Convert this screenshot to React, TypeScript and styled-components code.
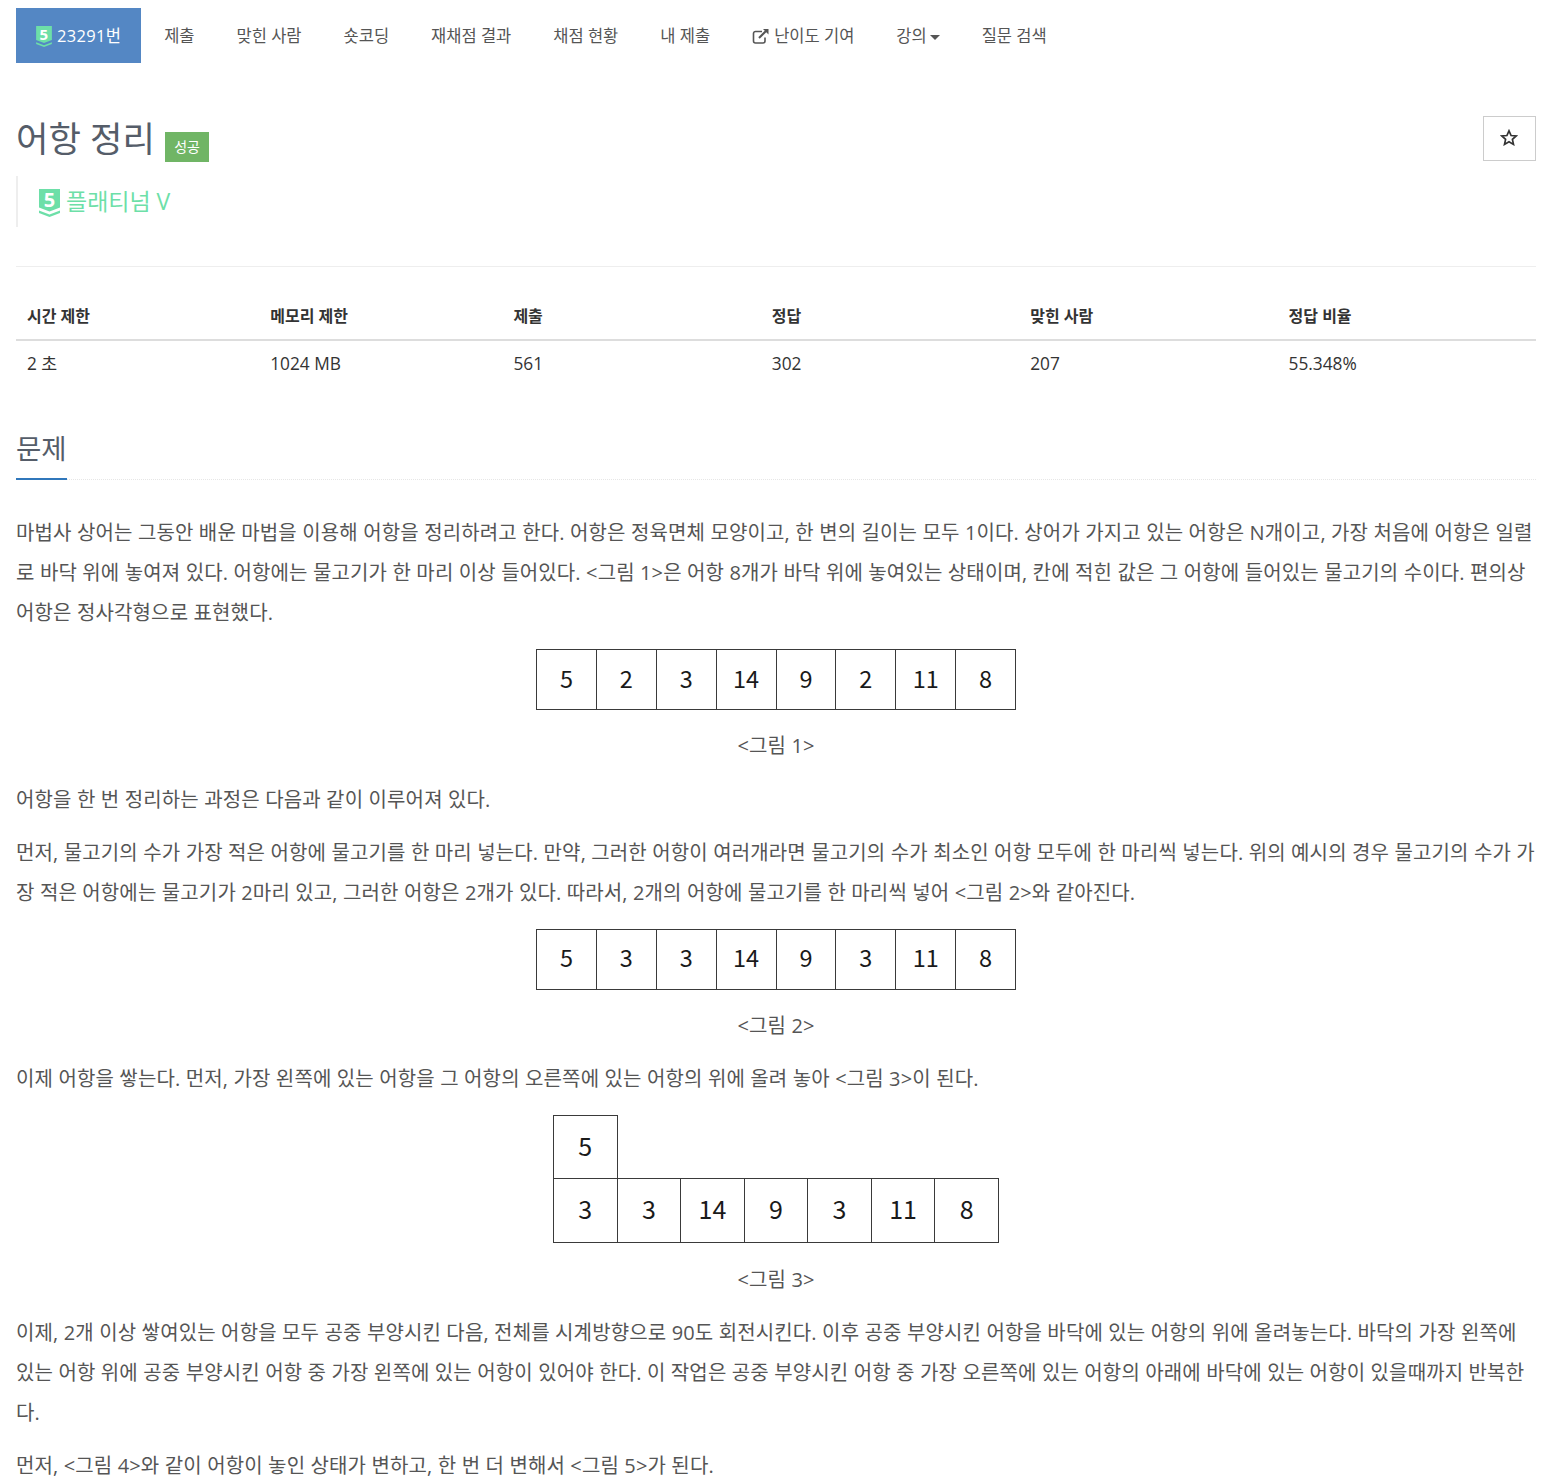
import React from "react";
import styled, { createGlobalStyle } from "styled-components";

const Global = createGlobalStyle`
  html, body { margin: 0; padding: 0; background: #fff; }
  body { font-family: "Open Sans", "Noto Sans CJK KR", sans-serif; color: #555; overflow: hidden; }
`;

const Page = styled.div`
  width: 1520px;
  height: 1480px;
  overflow: hidden;
  padding: 8px 10px 0 16px;
`;

const Nav = styled.nav`
  display: flex;
  align-items: center;
  height: 55px;
  gap: 2px;
`;

const Tab = styled.a<{ $active?: boolean }>`
  display: flex;
  align-items: center;
  height: 55px;
  padding: 0 20px;
  margin-right: ${(p) => (p.$active ? "1px" : "0")};
  font-size: 16.5px;
  line-height: 20px;
  letter-spacing: ${(p) => (p.$active ? "0.3px" : "0")};
  color: ${(p) => (p.$active ? "#fff" : "#555")};
  background: ${(p) => (p.$active ? "#5487c4" : "transparent")};
`;

const TabIcon = styled.svg`
  width: 16px;
  height: 21px;
  margin: 2px 5px 0 0;
  flex: none;
  overflow: visible;
`;

const LinkIcon = styled.svg`
  width: 18px;
  height: 16px;
  margin-right: 4px;
  flex: none;
`;

const Caret = styled.span`
  display: inline-block;
  margin-left: 3px;
  margin-top: 3px;
  border-top: 5px solid #555;
  border-left: 5.5px solid transparent;
  border-right: 5.5px solid transparent;
`;

const Header = styled.header`
  display: flex;
  align-items: flex-start;
  justify-content: space-between;
  margin-top: 53px;
  height: 46px;
`;

const Title = styled.h1`
  display: flex;
  align-items: flex-start;
  margin: 0;
  font-size: 35.3px;
  line-height: 44px;
  font-weight: 400;
  color: #555d69;
`;

const Badge = styled.span`
  display: flex;
  align-items: center;
  justify-content: center;
  width: 44px;
  height: 30px;
  margin: 16px 0 0 10px;
  background: #70b565;
  color: #fff;
  font-size: 14px;
  line-height: 30px;
`;

const StarButton = styled.button`
  display: flex;
  align-items: center;
  justify-content: center;
  width: 53px;
  height: 45px;
  padding: 0 2px 2px 0;
  background: #fff;
  border: 1px solid #ccc;
`;

const Tier = styled.div`
  display: flex;
  align-items: center;
  height: 51px;
  margin-top: 14px;
  padding: 0 0 2px 21px;
  box-sizing: border-box;
  border-left: 2px solid #eee;
  font-size: 23px;
  line-height: 34px;
  color: #6ddfa8;
`;

const TierIcon = styled.svg`
  width: 21px;
  height: 28px;
  margin: 4px 6px 0 0;
  flex: none;
  overflow: visible;
`;

const Rule = styled.hr`
  margin: 39px 0 0;
  border: 0;
  border-top: 1px solid #eee;
`;

const Stats = styled.table`
  width: 100%;
  margin-top: 27px;
  border-collapse: collapse;
  table-layout: fixed;
  font-size: 16px;
  line-height: 24px;
`;

const Th = styled.th<{ $w: string }>`
  width: ${(p) => p.$w};
  height: 46px;
  padding: 0 11px 2px;
  box-sizing: border-box;
  text-align: left;
  font-weight: 700;
  color: #333;
  border-bottom: 2px solid #ddd;
`;

const Td = styled.td`
  height: 45px;
  padding: 0 11px;
  font-size: 17.3px;
  color: #333;
`;

const SectionHead = styled.div`
  position: relative;
  margin-top: 40px;
  height: 53px;
  border-bottom: 1px dotted #e6e6e6;
`;

const SectionTitle = styled.h2`
  display: inline-block;
  height: 54px;
  margin: 0;
  box-sizing: border-box;
  font-size: 27.5px;
  line-height: 46px;
  font-weight: 400;
  color: #555d69;
  border-bottom: 2px solid #3077bb;
`;

const Body = styled.section`
  margin-top: 33px;
  font-size: 20px;
  letter-spacing: 0.14px;
  line-height: 40px;
  color: #555;
  word-break: break-all;
`;

const Para = styled.p`
  margin: 0 0 13.2px;
`;

const Caption = styled.p`
  margin: 0 0 13.2px;
  text-align: center;
`;

const FigureWrap = styled.div<{ $h: number; $top: number }>`
  display: flex;
  justify-content: center;
  align-items: flex-start;
  box-sizing: border-box;
  height: ${(p) => p.$h}px;
  padding-top: ${(p) => p.$top}px;
  margin-bottom: 13.2px;
`;

const Strip = styled.div<{ $cols: number; $size: number }>`
  display: grid;
  grid-template-columns: repeat(${(p) => p.$cols}, ${(p) => p.$size}px);
  grid-auto-rows: ${(p) => p.$size}px;
  padding: 0 1px 1px 0;
`;

const Cell = styled.div<{ $fs: number }>`
  display: flex;
  align-items: center;
  justify-content: center;
  margin: 0 -1px -1px 0;
  padding-bottom: 4px;
  box-sizing: border-box;
  border: 1px solid #3a3a3a;
  font-family: "Noto Sans CJK KR", sans-serif;
  font-size: ${(p) => p.$fs}px;
  letter-spacing: 0;
  color: #1a1a1a;
`;

const Blank = styled.div`
  grid-column: span 6;
`;

const Shield = ({ size }: { size: "s" | "l" }) => {
  const body = (
    <>
      <path d="M0 0H21V18.5L10.5 22.5L0 18.5Z" fill="#6ddfa8" />
      <path d="M0 21.5L10.5 25.5L21 21.5V24L10.5 28L0 24Z" fill="#6ddfa8" />
      <text x="10.5" y="18" textAnchor="middle" fontSize="20" fontWeight="700" fill="#fff" fontFamily="Open Sans, sans-serif">5</text>
    </>
  );
  return size === "s" ? (
    <TabIcon viewBox="0 0 21 28">{body}</TabIcon>
  ) : (
    <TierIcon viewBox="0 0 21 28">{body}</TierIcon>
  );
};

const Figure = ({ values }: { values: number[] }) => (
  <FigureWrap $h={67} $top={3}>
    <Strip $cols={8} $size={59.875}>
      {values.map((v, i) => (
        <Cell key={i} $fs={23.5}>{v}</Cell>
      ))}
    </Strip>
  </FigureWrap>
);

const tabs = ["제출", "맞힌 사람", "숏코딩", "재채점 결과", "채점 현황", "내 제출"];

export default function App() {
  return (
    <Page>
      <Global />
      <Nav>
        <Tab $active><Shield size="s" />23291번</Tab>
        {tabs.map((t) => <Tab key={t}>{t}</Tab>)}
        <Tab>
          <LinkIcon viewBox="0 0 18 16" fill="none" stroke="#555" strokeWidth="1.6">
            <path d="M10 3.5H3.5a2 2 0 0 0-2 2V13a2 2 0 0 0 2 2H11a2 2 0 0 0 2-2V9.5" />
            <path d="M7 10L15 2" strokeWidth="2" />
            <path d="M11 1H16.5V6.5Z" fill="#555" stroke="none" />
          </LinkIcon>
          난이도 기여
        </Tab>
        <Tab>강의<Caret /></Tab>
        <Tab>질문 검색</Tab>
      </Nav>

      <Header>
        <Title>어항 정리<Badge>성공</Badge></Title>
        <StarButton aria-label="star">
          <svg width="18" height="17" viewBox="0 0 18 17" fill="none" stroke="#333" strokeWidth="1.7">
            <path d="M9 1.8L11.1 6.5L16.2 7L12.4 10.4L13.5 15.4L9 12.8L4.5 15.4L5.6 10.4L1.8 7L6.9 6.5Z" />
          </svg>
        </StarButton>
      </Header>
      <Tier><Shield size="l" />플래티넘 V</Tier>
      <Rule />

      <Stats>
        <thead>
          <tr>
            <Th $w="16%">시간 제한</Th>
            <Th $w="16%">메모리 제한</Th>
            <Th $w="17%">제출</Th>
            <Th $w="17%">정답</Th>
            <Th $w="17%">맞힌 사람</Th>
            <Th $w="17%">정답 비율</Th>
          </tr>
        </thead>
        <tbody>
          <tr>
            <Td>2 초</Td>
            <Td>1024 MB</Td>
            <Td>561</Td>
            <Td>302</Td>
            <Td>207</Td>
            <Td>55.348%</Td>
          </tr>
        </tbody>
      </Stats>

      <SectionHead><SectionTitle>문제</SectionTitle></SectionHead>

      <Body>
        <Para>마법사 상어는 그동안 배운 마법을 이용해 어항을 정리하려고 한다. 어항은 정육면체 모양이고, 한 변의 길이는 모두 1이다. 상어가 가지고 있는 어항은 N개이고, 가장 처음에 어항은 일렬로 바닥 위에 놓여져 있다. 어항에는 물고기가 한 마리 이상 들어있다. &lt;그림 1&gt;은 어항 8개가 바닥 위에 놓여있는 상태이며, 칸에 적힌 값은 그 어항에 들어있는 물고기의 수이다. 편의상 어항은 정사각형으로 표현했다.</Para>
        <Figure values={[5, 2, 3, 14, 9, 2, 11, 8]} />
        <Caption>&lt;그림 1&gt;</Caption>
        <Para>어항을 한 번 정리하는 과정은 다음과 같이 이루어져 있다.</Para>
        <Para>먼저, 물고기의 수가 가장 적은 어항에 물고기를 한 마리 넣는다. 만약, 그러한 어항이 여러개라면 물고기의 수가 최소인 어항 모두에 한 마리씩 넣는다. 위의 예시의 경우 물고기의 수가 가장 적은 어항에는 물고기가 2마리 있고, 그러한 어항은 2개가 있다. 따라서, 2개의 어항에 물고기를 한 마리씩 넣어 &lt;그림 2&gt;와 같아진다.</Para>
        <Figure values={[5, 3, 3, 14, 9, 3, 11, 8]} />
        <Caption>&lt;그림 2&gt;</Caption>
        <Para>이제 어항을 쌓는다. 먼저, 가장 왼쪽에 있는 어항을 그 어항의 오른쪽에 있는 어항의 위에 올려 놓아 &lt;그림 3&gt;이 된다.</Para>
        <FigureWrap $h={134} $top={2}>
          <Strip $cols={7} $size={63.57}>
            <Cell $fs={25}>5</Cell>
            <Blank />
            {[3, 3, 14, 9, 3, 11, 8].map((v, i) => (
              <Cell key={i} $fs={25}>{v}</Cell>
            ))}
          </Strip>
        </FigureWrap>
        <Caption>&lt;그림 3&gt;</Caption>
        <Para>이제, 2개 이상 쌓여있는 어항을 모두 공중 부양시킨 다음, 전체를 시계방향으로 90도 회전시킨다. 이후 공중 부양시킨 어항을 바닥에 있는 어항의 위에 올려놓는다. 바닥의 가장 왼쪽에 있는 어항 위에 공중 부양시킨 어항 중 가장 왼쪽에 있는 어항이 있어야 한다. 이 작업은 공중 부양시킨 어항 중 가장 오른쪽에 있는 어항의 아래에 바닥에 있는 어항이 있을때까지 반복한다.</Para>
        <Para>먼저, &lt;그림 4&gt;와 같이 어항이 놓인 상태가 변하고, 한 번 더 변해서 &lt;그림 5&gt;가 된다.</Para>
      </Body>
    </Page>
  );
}
